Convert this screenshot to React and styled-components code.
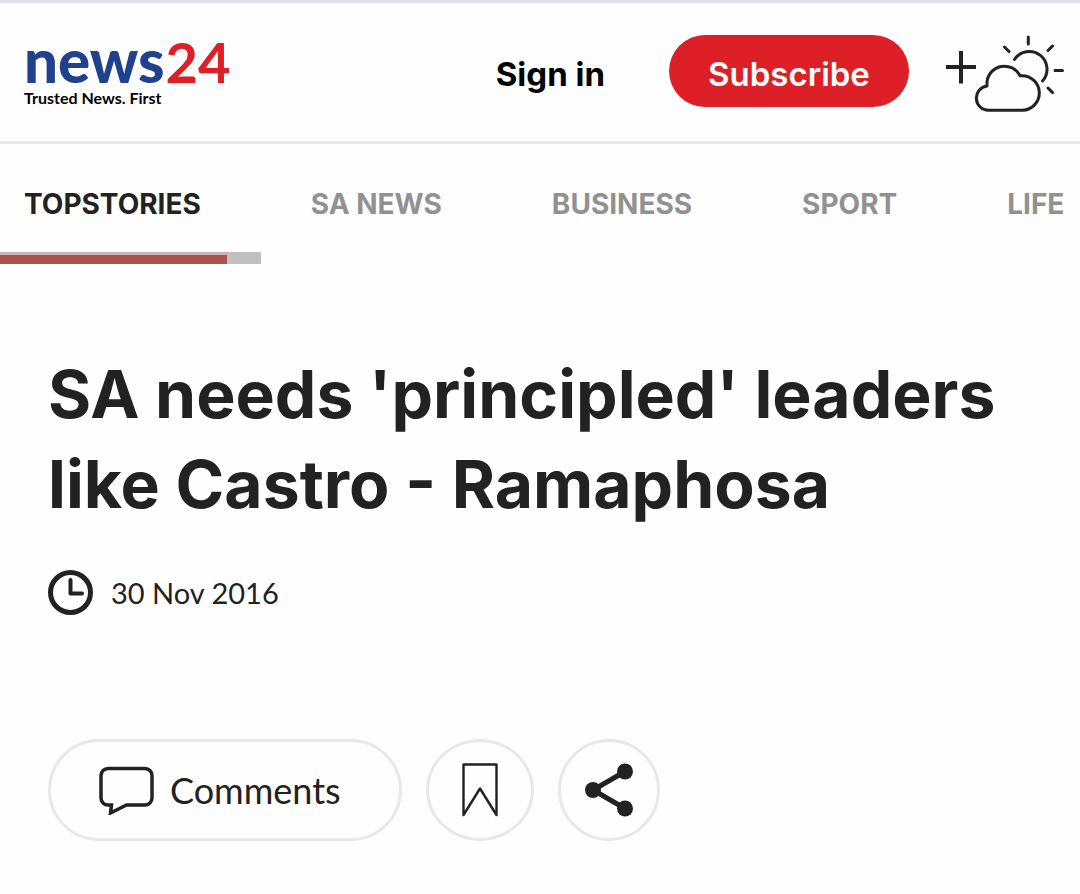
import styled, { createGlobalStyle } from 'styled-components'

const colors = {
  ink: '#222222',
  red: '#dd2027',
  blue: '#20418e',
  muted: '#919191',
  line: '#e8e8e8',
}

const fonts = {
  text: 'Lato, "Open Sans", sans-serif',
  strong: 'Inter, "Open Sans", sans-serif',
}

const tabs = ['TOPSTORIES', 'SA NEWS', 'BUSINESS', 'SPORT', 'LIFE']

export default function App () {
  return (
    <>
      <GlobalStyle />
      <Header>
        <Logo href="#" aria-label="news24, Trusted News. First">
          <Wordmark>
            <WordNews>news</WordNews>
            <WordNumber>24</WordNumber>
          </Wordmark>
          <Tagline>Trusted News. First</Tagline>
        </Logo>
        <SignIn href="#">Sign in</SignIn>
        <Subscribe type="button">Subscribe</Subscribe>
        <WeatherButton type="button" aria-label="Add weather">
          <WeatherIcon />
        </WeatherButton>
      </Header>
      <Nav aria-label="Sections">
        {tabs.map((tab, i) => (
          <Tab key={tab} href="#" $active={i === 0} aria-current={i === 0 ? 'page' : undefined}>
            {tab}
          </Tab>
        ))}
      </Nav>
      <ScrollTrack>
        <ScrollThumb />
      </ScrollTrack>
      <Article>
        <Title>SA needs &apos;principled&apos; leaders like Castro - Ramaphosa</Title>
        <Meta>
          <ClockIcon />
          <time dateTime="2016-11-30">30 Nov 2016</time>
        </Meta>
        <Actions>
          <CommentsButton type="button">
            <CommentIcon />
            Comments
          </CommentsButton>
          <IconButton type="button" aria-label="Save article" $width="108px">
            <BookmarkIcon />
          </IconButton>
          <IconButton type="button" aria-label="Share" $width="102px">
            <ShareIcon />
          </IconButton>
        </Actions>
      </Article>
    </>
  )
}

function WeatherIcon () {
  return (
    <svg width="120" height="78" viewBox="945 35 120 78" fill="none" stroke={colors.ink} strokeWidth="3" aria-hidden="true">
      <path d="M946 67h30M961 51v32.500" strokeWidth="4" />
      <g strokeLinecap="round" strokeLinejoin="round">
        <path d="M988.500 110.300A12.200 12.200 0 0 1 987 86V82A17.500 17.500 0 0 1 1020 75.700h1.500A17.300 17.300 0 0 1 1022.500 110.300z" />
        <path d="M1014.500 59.500a17.700 17.700 0 1 1 28 21.500" />
        <path d="M1028.300 37v7M1004.500 47l4.500 4.500M1052.500 46l-4.500 4.500M1055 70.500h7.500M1048 88l4.500 4.500" />
      </g>
    </svg>
  )
}

function ClockIcon () {
  return (
    <svg width="45" height="45" viewBox="0 0 45 45" fill="none" stroke={colors.ink} aria-hidden="true">
      <circle cx="22.500" cy="22.500" r="20" strokeWidth="5" />
      <path d="M22.500 10v13.500H34" strokeWidth="4" strokeLinecap="round" strokeLinejoin="round" />
    </svg>
  )
}

function CommentIcon () {
  return (
    <svg width="56" height="50" viewBox="0 0 56 50" fill="none" stroke={colors.ink} strokeWidth="3.500" aria-hidden="true">
      <path d="M9 3.500h37a7 7 0 0 1 7 7v22.500a7 7 0 0 1-7 7H27.500L11.500 48l1-8H9a7 7 0 0 1-7-7v-22.500a7 7 0 0 1 7-7z" />
    </svg>
  )
}

function BookmarkIcon () {
  return (
    <svg width="38" height="54" viewBox="0 0 38 54" fill="none" stroke={colors.ink} strokeWidth="2.400" strokeLinejoin="round" aria-hidden="true">
      <path d="M2.500 1.500h33v50.500L19 25.500L2.500 52z" />
    </svg>
  )
}

function ShareIcon () {
  return (
    <svg width="48" height="54" viewBox="0 0 48 54" fill={colors.ink} stroke={colors.ink} aria-hidden="true">
      <path d="M40 8.500L8 27l32 18.500" fill="none" strokeWidth="5" />
      <g stroke="none">
        <circle cx="40" cy="8.500" r="8" />
        <circle cx="8" cy="27" r="8" />
        <circle cx="40" cy="45.500" r="8" />
      </g>
    </svg>
  )
}

const GlobalStyle = createGlobalStyle`
  *, *::before, *::after {
    box-sizing: border-box;
  }
  body {
    margin: 0;
    color: ${colors.ink};
    background-color: #fefefe;
    font-family: ${fonts.text};
    overflow-x: hidden;
  }
  a {
    color: inherit;
    text-decoration: none;
  }
  button {
    padding: 0;
    border: none;
    background: none;
    color: inherit;
    font-family: inherit;
    cursor: pointer;
  }
  svg {
    display: block;
    flex-shrink: 0;
  }
`
const Header = styled.header`
  display: flex;
  align-items: center;
  height: 144px;
  padding: 0 15px 2px 24px;
  border-top: 3px solid #e1e2e7;
  border-bottom: 3px solid ${colors.line};
`
const Logo = styled.a`
  margin-right: auto;
  padding-top: 2px;
`
const Wordmark = styled.span`
  display: flex;
  align-items: baseline;
  gap: 1px;
  height: 52px;
  line-height: 48px;
`
const WordNews = styled.span`
  color: ${colors.blue};
  font-size: 60px;
  font-weight: 900;
`
const WordNumber = styled.span`
  color: ${colors.red};
  font-size: 56px;
  font-weight: 700;
`
const Tagline = styled.span`
  display: block;
  color: #000;
  font-size: 16px;
  font-weight: 700;
  line-height: 20px;
`
const SignIn = styled.a`
  padding-top: 6px;
  color: #000;
  font-family: ${fonts.strong};
  font-size: 33px;
  font-weight: 700;
`
const Subscribe = styled.button`
  width: 240px;
  height: 72px;
  margin: 0 36px 0 64px;
  padding-top: 6px;
  border-radius: 36px;
  background-color: ${colors.red};
  color: #fff;
  font-family: ${fonts.strong};
  font-size: 33px;
  font-weight: 600;
`
const WeatherButton = styled.button`
  width: 120px;
  padding-top: 6px;
`
const Nav = styled.nav`
  display: flex;
  gap: 110px;
  height: 108px;
  padding: 12px 0 0 24px;
  align-items: center;
  white-space: nowrap;
`
const Tab = styled.a`
  color: ${({ $active }) => ($active ? colors.ink : colors.muted)};
  font-family: ${fonts.strong};
  font-size: 28px;
  font-weight: 700;
`
const ScrollTrack = styled.div`
  width: 261px;
  height: 12px;
  background-color: #c0c0c0;
`
const ScrollThumb = styled.div`
  width: 227px;
  height: 12px;
  border-top: 3px solid #ccb4b4;
  background-color: #ad5052;
`
const Article = styled.article`
  padding: 85px 48px 54px;
`
const Title = styled.h1`
  margin: 0;
  font-family: ${fonts.strong};
  font-size: 66px;
  font-weight: 700;
  line-height: 90px;
`
const Meta = styled.div`
  display: flex;
  align-items: center;
  gap: 18px;
  margin-top: 41px;
  font-size: 29px;
  line-height: 45px;
`
const Actions = styled.div`
  display: flex;
  gap: 24px;
  margin-top: 124px;
`
const PillButton = styled.button`
  display: flex;
  align-items: center;
  height: 102px;
  border: 3px solid ${colors.line};
  border-radius: 51px;
`
const CommentsButton = styled(PillButton)`
  width: 354px;
  padding-left: 48px;
  gap: 15px;
  font-size: 36px;
`
const IconButton = styled(PillButton)`
  justify-content: center;
  width: ${({ $width }) => $width};
  border-radius: 50%;
`
